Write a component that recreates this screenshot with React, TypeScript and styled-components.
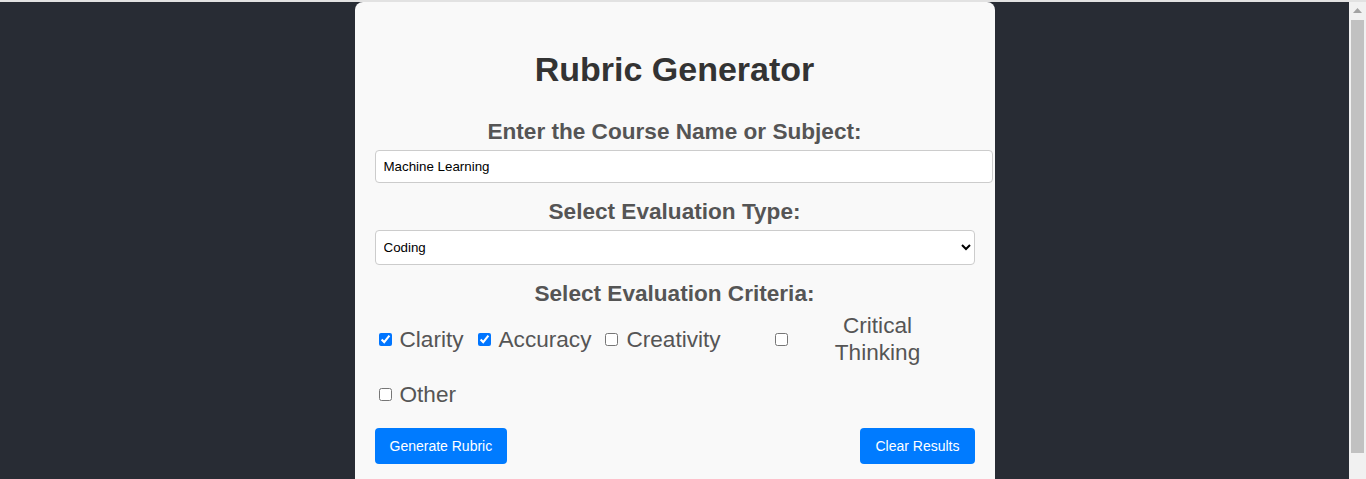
import React, { useState } from "react";
import styled, { createGlobalStyle } from "styled-components";

const GlobalStyle = createGlobalStyle`
  html, body {
    margin: 0;
    padding: 0;
    background: #282c34;
    overflow: hidden;
  }
  body {
    border-top: 2px solid #e2e2e2;
    font-family: "Liberation Sans", Arial, sans-serif;
  }
`;

const Window = styled.div`
  display: flex;
  height: 477px;
`;

const Page = styled.div`
  flex: 1;
  display: flex;
  justify-content: center;
  align-items: flex-start;
  background: #282c34;
  overflow: hidden;
`;

const Scrollbar = styled.div`
  flex: 0 0 17px;
  display: flex;
  flex-direction: column;
  align-items: center;
  background: #f1f1f1;
`;

const ScrollArrow = styled.svg`
  flex: none;
  margin: 6px 0 6px;
`;

const ScrollThumb = styled.div`
  width: 13px;
  height: 433px;
  margin-top: 1px;
  background: #c1c1c1;
`;

const Card = styled.div`
  width: 600px;
  padding: 20px 20px 28px;
  background: #f9f9f9;
  border-radius: 8px;
  text-align: center;
`;

const Title = styled.h1`
  margin: 28px 0 29px;
  font-size: 34px;
  line-height: 39px;
  font-weight: 700;
  color: #333;
`;

const FieldLabel = styled.label<{ $first?: boolean }>`
  display: block;
  margin: ${(p) => (p.$first ? "0" : "15px")} 0 4px;
  font-size: 22.6px;
  line-height: 28px;
  font-weight: 700;
  color: #555;
`;

const TextInput = styled.input`
  display: block;
  width: 100%;
  box-sizing: content-box;
  padding: 8px;
  border: 1px solid #ccc;
  border-radius: 4px;
  background: #fff;
  font-family: "Liberation Sans", Arial, sans-serif;
  font-size: 13.333px;
  line-height: 15px;
  color: #000;
  margin: 0;
`;

const Select = styled.select`
  display: block;
  width: 100%;
  height: 35px;
  box-sizing: border-box;
  padding: 0 4px;
  border: 1px solid #ccc;
  border-radius: 4px;
  background: #fff;
  font-family: "Liberation Sans", Arial, sans-serif;
  font-size: 13.333px;
  color: #000;
  margin: 0;
`;

const CriteriaGroup = styled.div`
  display: flex;
  flex-wrap: wrap;
  align-items: center;
  row-gap: 15px;
  margin-top: 2px;
`;

const CriterionLabel = styled.label<{ $stacked?: boolean }>`
  display: flex;
  align-items: center;
  margin-right: 10px;
  font-size: 22.6px;
  line-height: 27px;
  color: #555;
  ${(p) => (p.$stacked ? "flex: 0 0 194px; margin-left: auto;" : "")}
`;

const Check = styled.input`
  width: 13px;
  height: 13px;
  margin: 3px 3px 3px 4px;
  flex: none;
`;

const CriterionText = styled.span<{ $stacked?: boolean }>`
  margin-left: 5px;
  ${(p) =>
    p.$stacked
      ? "width: min-content; margin: 0 auto; text-align: center;"
      : "white-space: nowrap;"}
`;

const ButtonRow = styled.div`
  display: flex;
  justify-content: space-between;
  margin-top: 20px;
`;

const Button = styled.button`
  padding: 10px 15px;
  border: none;
  border-radius: 4px;
  background: #007bff;
  color: #fff;
  font-family: "Liberation Sans", Arial, sans-serif;
  font-size: 14px;
  line-height: 16px;
  cursor: pointer;
`;

const criteria = [
  { name: "Clarity", checked: true },
  { name: "Accuracy", checked: true },
  { name: "Creativity", checked: false },
  { name: "Critical Thinking", checked: false, stacked: true },
  { name: "Other", checked: false },
];

export default function App() {
  const [course, setCourse] = useState("Machine Learning");
  const [type, setType] = useState("Coding");
  const [checks, setChecks] = useState(criteria.map((c) => c.checked));

  return (
    <>
      <GlobalStyle />
      <Window>
        <Page>
          <Card>
            <Title>Rubric Generator</Title>
            <FieldLabel $first htmlFor="course">
              Enter the Course Name or Subject:
            </FieldLabel>
            <TextInput
              id="course"
              type="text"
              value={course}
              onChange={(e) => setCourse(e.target.value)}
            />
            <FieldLabel htmlFor="type">Select Evaluation Type:</FieldLabel>
            <Select id="type" value={type} onChange={(e) => setType(e.target.value)}>
              <option>Coding</option>
              <option>Essay</option>
              <option>Presentation</option>
              <option>Project</option>
            </Select>
            <FieldLabel as="div">Select Evaluation Criteria:</FieldLabel>
            <CriteriaGroup>
              {criteria.map((c, i) => (
                <CriterionLabel key={c.name} $stacked={c.stacked}>
                  <Check
                    type="checkbox"
                    checked={checks[i]}
                    onChange={() =>
                      setChecks((prev) => prev.map((v, j) => (j === i ? !v : v)))
                    }
                  />
                  <CriterionText $stacked={c.stacked}>{c.name}</CriterionText>
                </CriterionLabel>
              ))}
            </CriteriaGroup>
            <ButtonRow>
              <Button>Generate Rubric</Button>
              <Button>Clear Results</Button>
            </ButtonRow>
          </Card>
        </Page>
        <Scrollbar>
          <ScrollArrow width="9" height="5" viewBox="0 0 9 5">
            <path d="M4.5 0 L9 5 L0 5 Z" fill="#a3a3a3" />
          </ScrollArrow>
          <ScrollThumb />
        </Scrollbar>
      </Window>
    </>
  );
}
